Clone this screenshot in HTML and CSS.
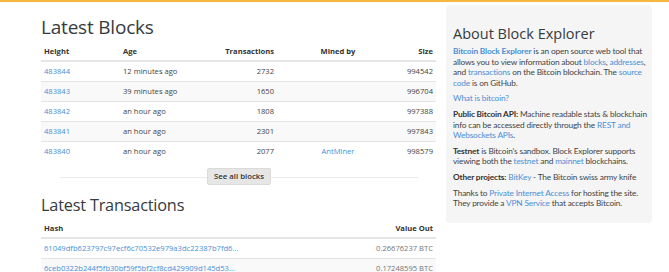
FILE: index.html
```
<!DOCTYPE html>
<html lang="en">
<head>
    <meta charset="UTF-8">
    <meta name="viewport" content="width=device-width, initial-scale=1.0">
    <title>Bitcoin Block Explorer</title>
    <link rel="stylesheet" href="styles.css">
</head>
<body>
<div class="topbar"></div>

<div class="container">
    <main class="main">
        <section>
            <h1>Latest Blocks</h1>
            <table class="blocks">
                <colgroup>
                    <col class="c-height">
                    <col class="c-age">
                    <col class="c-txs">
                    <col class="c-miner">
                    <col class="c-size">
                </colgroup>
                <thead>
                <tr>
                    <th>Height</th>
                    <th>Age</th>
                    <th class="right">Transactions</th>
                    <th class="center">Mined by</th>
                    <th class="right">Size</th>
                </tr>
                </thead>
                <tbody>
                <tr>
                    <td><a href="#">483844</a></td>
                    <td>12 minutes ago</td>
                    <td class="right">2732</td>
                    <td class="center"></td>
                    <td class="right">994542</td>
                </tr>
                <tr>
                    <td><a href="#">483843</a></td>
                    <td>39 minutes ago</td>
                    <td class="right">1650</td>
                    <td class="center"></td>
                    <td class="right">996704</td>
                </tr>
                <tr>
                    <td><a href="#">483842</a></td>
                    <td>an hour ago</td>
                    <td class="right">1808</td>
                    <td class="center"></td>
                    <td class="right">997388</td>
                </tr>
                <tr>
                    <td><a href="#">483841</a></td>
                    <td>an hour ago</td>
                    <td class="right">2301</td>
                    <td class="center"></td>
                    <td class="right">997843</td>
                </tr>
                <tr>
                    <td><a href="#">483840</a></td>
                    <td>an hour ago</td>
                    <td class="right">2077</td>
                    <td class="center"><a href="#">AntMiner</a></td>
                    <td class="right">998579</td>
                </tr>
                </tbody>
            </table>
            <div class="more">
                <a class="btn" href="#">See all blocks</a>
            </div>
        </section>

        <section>
            <h1 class="second">Latest Transactions</h1>
            <table class="txs">
                <colgroup>
                    <col class="c-hash">
                    <col class="c-value">
                </colgroup>
                <thead>
                <tr>
                    <th>Hash</th>
                    <th class="right">Value Out</th>
                </tr>
                </thead>
                <tbody>
                <tr>
                    <td><a href="#">61049dfb623797c97ecf6c70532e979a3dc22387b7fd6...</a></td>
                    <td class="right muted">0.26676237 BTC</td>
                </tr>
                <tr>
                    <td><a href="#">6ceb0322b244f5fb30bf59f5bf2cf8cd429909d145d53...</a></td>
                    <td class="right muted">0.17248595 BTC</td>
                </tr>
                </tbody>
            </table>
        </section>
    </main>

    <aside class="about">
        <h2>About Block Explorer</h2>
        <p><a href="#"><strong>Bitcoin Block Explorer</strong></a> is an open source web tool that allows you to view information about <a href="#">blocks</a>, <a href="#">addresses</a>, and <a href="#">transactions</a> on the Bitcoin blockchain. The <a href="#">source code</a> is on GitHub.</p>
        <p><a href="#">What is bitcoin?</a></p>
        <p><strong>Public Bitcoin API:</strong> Machine readable stats &amp; blockchain info can be accessed directly through the <a href="#">REST and Websockets APIs</a>.</p>
        <p><strong>Testnet</strong> is Bitcoin's sandbox. Block Explorer supports viewing both the <a href="#">testnet</a> and <a href="#">mainnet</a> blockchains.</p>
        <p><strong>Other projects:</strong> <a href="#">BitKey</a> - The Bitcoin swiss army knife</p>
        <p>Thanks to <a href="#">Private Internet Access</a> for hosting the site. They provide a <a href="#">VPN Service</a> that accepts Bitcoin.</p>
    </aside>
</div>
</body>
</html>
```

FILE: styles.css
```
* {
    margin: 0;
    padding: 0;
    box-sizing: border-box;
}
body {
    font-family: 'Open Sans', 'DejaVu Sans', sans-serif;
    color: #444;
    background: #fff;
    overflow: hidden;
}
a {
    color: #4a8fd6;
    text-decoration: none;
}
.topbar {
    height: 2px;
    background: #f6b73c;
}
.container {
    display: flex;
    gap: 10px;
    padding: 3px 0 0 41px;
}
.main {
    width: 395px;
}
h1 {
    font-size: 19px;
    font-weight: 500;
    color: #363b40;
    line-height: 24px;
    margin: 10px 0 2px;
    letter-spacing: -0.2px;
}
h1.second {
    font-size: 16.3px;
    margin: 8px 0 1px;
}
table {
    width: 100%;
    border-collapse: collapse;
    table-layout: fixed;
    font-size: 7.6px;
}
th, td {
    height: 20px;
    padding: 0 3px;
    text-align: left;
    vertical-align: middle;
    white-space: nowrap;
    overflow: hidden;
}
th {
    font-weight: 700;
    color: #333;
    border-bottom: 2px solid #e5e5e5;
}
td {
    border-top: 1px solid #e5e5e5;
}
tbody tr:nth-child(even) {
    background: #f9f9f9;
}
.right { text-align: right; }
.center { text-align: center; }
.muted { color: #777; }
.c-height { width: 79px; }
.c-age { width: 90px; }
.c-txs { width: 67px; }
.c-miner { width: 122px; }
.c-size { width: 37px; }
.c-hash { width: 300px; }
.c-value { width: 95px; }
.more {
    position: relative;
    display: flex;
    justify-content: center;
    margin: 7px 18px 0 19px;
}
.more::before {
    content: "";
    position: absolute;
    left: 0;
    right: 0;
    top: 9px;
    border-top: 1px solid #eaeaea;
}
.btn {
    position: relative;
    display: inline-block;
    height: 17px;
    line-height: 15px;
    padding: 0 6px;
    font-size: 7.8px;
    font-weight: 600;
    color: #333;
    background: #e6e6e6;
    border: 1px solid #dadada;
    border-radius: 2px;
}
.about {
    width: 206px;
    background: #f5f5f5;
    border-radius: 4px;
    padding: 19px 2px 9px 7px;
    align-self: flex-start;
    font-family: Lato, 'Open Sans', sans-serif;
    font-size: 8.3px;
    letter-spacing: -0.16px;
    line-height: 10.5px;
    color: #444;
}
.about h2 {
    font-family: 'Open Sans', sans-serif;
    font-size: 14.5px;
    font-weight: 500;
    letter-spacing: 0;
    color: #363b40;
    line-height: 20px;
    margin-bottom: 2px;
}
.about p {
    margin-bottom: 5.3px;
}
.about strong {
    font-weight: 700;
    color: #333;
}
.about a strong {
    color: #4a8fd6;
}
```
